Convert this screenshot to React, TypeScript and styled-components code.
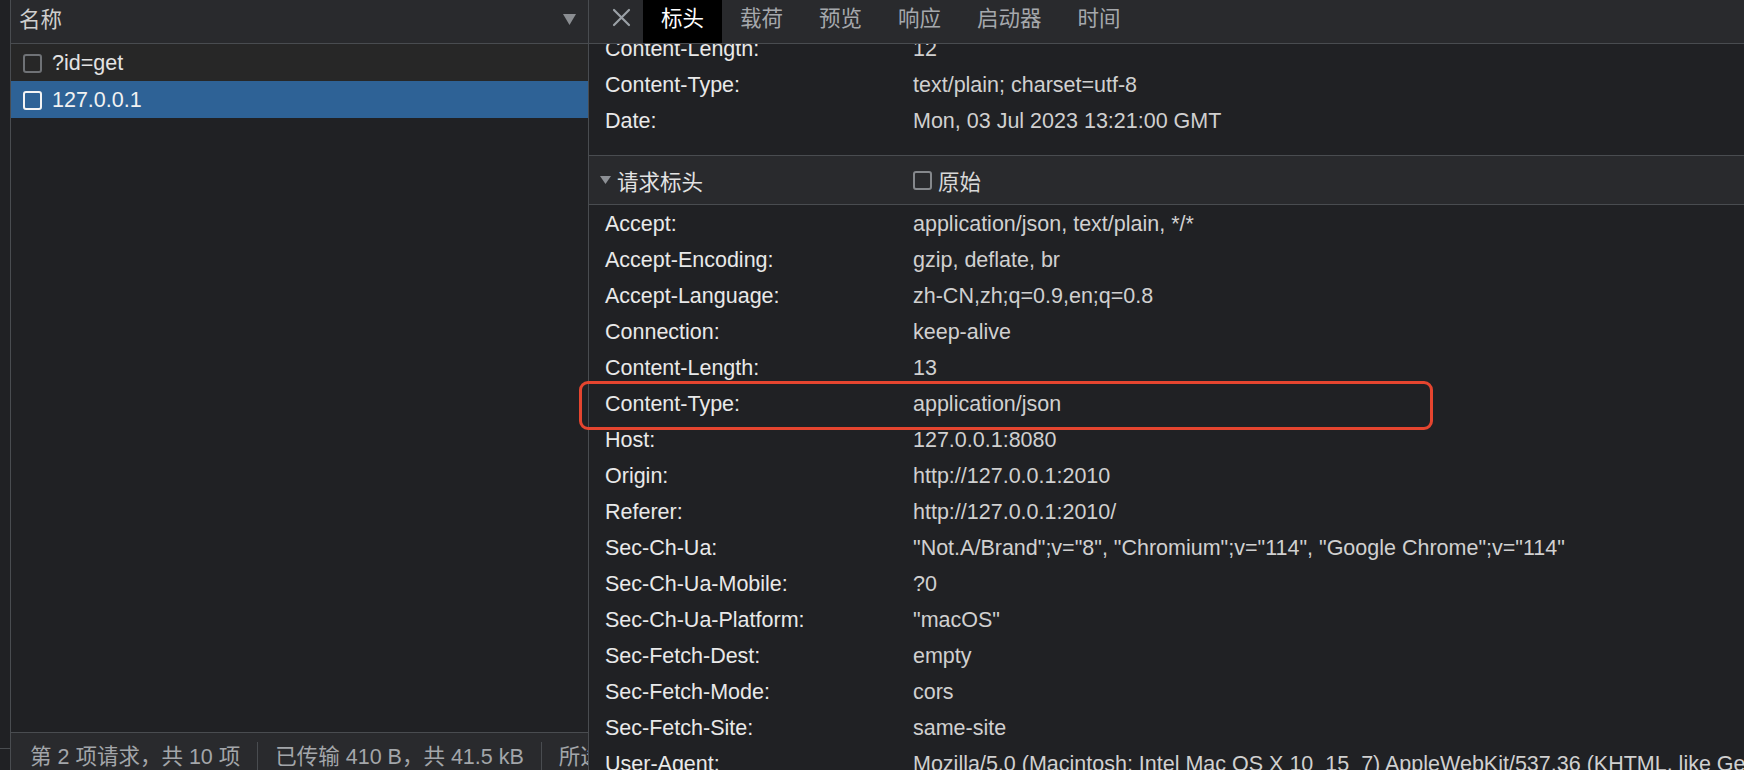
import React, { useLayoutEffect, useRef } from "react";
import styled, { createGlobalStyle } from "styled-components";

const GlobalStyle = createGlobalStyle`
  html, body { margin: 0; padding: 0; background: #202124; }
  body { font-family: "Liberation Sans", "Noto Sans CJK SC", sans-serif; }
  * { box-sizing: border-box; }
`;

const BORDER = "#494c50";
const BAR = "#292a2d";
const BG = "#202124";

const Screen = styled.div`
  position: relative;
  display: flex;
  width: 1744px;
  height: 770px;
  overflow: hidden;
  background: ${BG};
  font-size: 21.5px;
  color: #e3e3e3;
`;

const Strip = styled.div`
  width: 11px;
  flex: none;
  border-right: 1px solid ${BORDER};
  display: flex;
  flex-direction: column;
`;

const StripTop = styled.div`
  height: 749px;
  flex: none;
  border-bottom: 1px solid ${BORDER};
`;

const LeftPanel = styled.div`
  width: 578px;
  flex: none;
  display: flex;
  flex-direction: column;
  border-right: 1px solid ${BORDER};
  overflow: hidden;
`;

const ListHeader = styled.div`
  height: 44px;
  flex: none;
  display: flex;
  align-items: flex-start;
  justify-content: space-between;
  padding: 8px 12px 0 8px;
  background: ${BAR};
  border-bottom: 1px solid ${BORDER};
  line-height: 24px;
  color: #cfcfcf;
`;

const DropIcon = styled.svg`
  margin-top: 6px;
`;

const List = styled.div`
  flex: 1;
  background: ${BG};
`;

const ListRow = styled.div<{ $selected?: boolean }>`
  height: 37px;
  display: flex;
  align-items: center;
  gap: 10px;
  padding-left: 12px;
  padding-top: 1px;
  background: ${(p) => (p.$selected ? "#2e6296" : "#272727")};
  color: ${(p) => (p.$selected ? "#f2f2f2" : "#e3e3e3")};
`;

const Box = styled.span<{ $light?: boolean; $size?: number; $tone?: string }>`
  display: inline-block;
  flex: none;
  width: ${(p) => p.$size ?? 19}px;
  height: ${(p) => p.$size ?? 19}px;
  border: 2px solid ${(p) => (p.$light ? "#f4f4f4" : p.$tone ?? "#6f7276")};
  border-radius: 3px;
`;

const StatusBar = styled.div`
  height: 38px;
  flex: none;
  display: flex;
  align-items: stretch;
  gap: 17px;
  padding-left: 19px;
  background: ${BAR};
  border-top: 1px solid ${BORDER};
  white-space: nowrap;
  color: #a3a6aa;
`;

const StatusText = styled.span`
  padding-top: 12px;
  line-height: 24px;
`;

const Divider = styled.span`
  width: 1px;
  flex: none;
  margin-top: 9px;
  background: ${BORDER};
`;

const RightPanel = styled.div`
  flex: 1;
  min-width: 0;
  display: flex;
  flex-direction: column;
`;

const TabBar = styled.div`
  height: 44px;
  flex: none;
  display: flex;
  align-items: stretch;
  background: ${BAR};
  border-bottom: 1px solid ${BORDER};
`;

const CloseButton = styled.div`
  width: 54px;
  flex: none;
  padding: 8px 0 0 23px;
`;

const Tab = styled.div<{ $active?: boolean }>`
  padding: 7px 18px 0;
  line-height: 24px;
  background: ${(p) => (p.$active ? "#000000" : "transparent")};
  color: ${(p) => (p.$active ? "#ffffff" : "#a5a8ac")};
`;

const Pane = styled.div`
  position: relative;
  flex: 1;
  overflow: hidden;
  background: ${BG};
`;

const SectionHeader = styled.div`
  height: 50px;
  display: flex;
  align-items: center;
  padding-left: 11px;
  background: ${BAR};
  border-top: 1px solid ${BORDER};
  border-bottom: 1px solid ${BORDER};
`;

const SectionTitle = styled.div`
  width: 313px;
  display: flex;
  align-items: center;
  gap: 6px;
  color: #e3e3e3;
`;

const RawToggle = styled.label`
  display: flex;
  align-items: center;
  gap: 6px;
  color: #d8d8d8;
`;

const Rows = styled.div`
  padding: 1px 0 16px;
`;

const Row = styled.div`
  height: 36px;
  display: flex;
  align-items: center;
  padding-left: 16px;
  white-space: nowrap;
`;

const Name = styled.span`
  width: 308px;
  flex: none;
  color: #e9e9e9;
`;

const Value = styled.span`
  color: #d0d0d0;
`;

const Highlight = styled.div`
  position: absolute;
  left: 579px;
  top: 381px;
  width: 854px;
  height: 49px;
  border: 3px solid #e5452f;
  border-radius: 9px;
  pointer-events: none;
`;

const responseHeaders: [string, string][] = [
  ["Access-Control-Allow-Origin:", "*"],
  ["Connection:", "keep-alive"],
  ["Content-Length:", "12"],
  ["Content-Type:", "text/plain; charset=utf-8"],
  ["Date:", "Mon, 03 Jul 2023 13:21:00 GMT"],
];

const requestHeaders: [string, string][] = [
  ["Accept:", "application/json, text/plain, */*"],
  ["Accept-Encoding:", "gzip, deflate, br"],
  ["Accept-Language:", "zh-CN,zh;q=0.9,en;q=0.8"],
  ["Connection:", "keep-alive"],
  ["Content-Length:", "13"],
  ["Content-Type:", "application/json"],
  ["Host:", "127.0.0.1:8080"],
  ["Origin:", "http://127.0.0.1:2010"],
  ["Referer:", "http://127.0.0.1:2010/"],
  ["Sec-Ch-Ua:", "\"Not.A/Brand\";v=\"8\", \"Chromium\";v=\"114\", \"Google Chrome\";v=\"114\""],
  ["Sec-Ch-Ua-Mobile:", "?0"],
  ["Sec-Ch-Ua-Platform:", "\"macOS\""],
  ["Sec-Fetch-Dest:", "empty"],
  ["Sec-Fetch-Mode:", "cors"],
  ["Sec-Fetch-Site:", "same-site"],
  ["User-Agent:", "Mozilla/5.0 (Macintosh; Intel Mac OS X 10_15_7) AppleWebKit/537.36 (KHTML, like Gecko) Chrome/114.0.0.0 Safari/537.36"],
];

const tabs = ["标头", "载荷", "预览", "响应", "启动器", "时间"];

const Caret = () => (
  <svg width="11" height="10" viewBox="0 0 11 10">
    <polygon points="0,1 11,1 5.5,9" fill="#8d9095" />
  </svg>
);

export default function App() {
  const paneRef = useRef<HTMLDivElement>(null);
  const anchorRef = useRef<HTMLDivElement>(null);

  useLayoutEffect(() => {
    if (paneRef.current && anchorRef.current) {
      paneRef.current.scrollTop = anchorRef.current.offsetTop + 13;
    }
  }, []);

  return (
    <>
      <GlobalStyle />
      <Screen>
        <Strip>
          <StripTop />
        </Strip>
        <LeftPanel>
          <ListHeader>
            <span>名称</span>
            <DropIcon width="13" height="11" viewBox="0 0 13 11">
              <polygon points="0,0 13,0 6.5,11" fill="#8a8d91" />
            </DropIcon>
          </ListHeader>
          <List>
            <ListRow>
              <Box />
              <span>?id=get</span>
            </ListRow>
            <ListRow $selected>
              <Box $light />
              <span>127.0.0.1</span>
            </ListRow>
          </List>
          <StatusBar>
            <StatusText>第 2 项请求，共 10 项</StatusText>
            <Divider />
            <StatusText>已传输 410 B，共 41.5 kB</StatusText>
            <Divider />
            <StatusText>所选资源 41.5 kB</StatusText>
          </StatusBar>
        </LeftPanel>
        <RightPanel>
          <TabBar>
            <CloseButton>
              <svg width="19" height="19" viewBox="0 0 19 19">
                <path d="M2 2 L17 17 M17 2 L2 17" stroke="#9aa0a6" strokeWidth="2.2" strokeLinecap="round" />
              </svg>
            </CloseButton>
            {tabs.map((t, i) => (
              <Tab key={t} $active={i === 0}>
                {t}
              </Tab>
            ))}
          </TabBar>
          <Pane ref={paneRef}>
            <SectionHeader>
              <SectionTitle>
                <Caret />
                <span>响应标头</span>
              </SectionTitle>
              <RawToggle>
                <Box $size={19} $tone="#85888c" />
                <span>原始</span>
              </RawToggle>
            </SectionHeader>
            <Rows>
              {responseHeaders.map(([k, v], i) => (
                <Row key={k} ref={i === 2 ? anchorRef : undefined}>
                  <Name>{k}</Name>
                  <Value>{v}</Value>
                </Row>
              ))}
            </Rows>
            <SectionHeader>
              <SectionTitle>
                <Caret />
                <span>请求标头</span>
              </SectionTitle>
              <RawToggle>
                <Box $size={19} $tone="#85888c" />
                <span>原始</span>
              </RawToggle>
            </SectionHeader>
            <Rows>
              {requestHeaders.map(([k, v]) => (
                <Row key={k}>
                  <Name>{k}</Name>
                  <Value>{v}</Value>
                </Row>
              ))}
            </Rows>
          </Pane>
        </RightPanel>
        <Highlight />
      </Screen>
    </>
  );
}
